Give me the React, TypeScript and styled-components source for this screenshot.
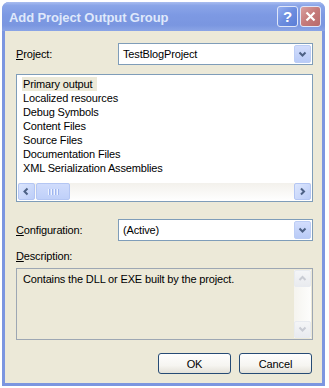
import styled, { createGlobalStyle } from 'styled-components';

const GlobalStyle = createGlobalStyle`
  body {
    margin: 0;
    background: #ffffff;
    font-family: "Liberation Sans", Arial, sans-serif;
    font-size: 11px;
    letter-spacing: -0.15px;
    color: #000000;
  }
`;

const outputs = [
  'Primary output',
  'Localized resources',
  'Debug Symbols',
  'Content Files',
  'Source Files',
  'Documentation Files',
  'XML Serialization Assemblies',
];

const Window = styled.div`
  margin: 2px 0 0 2px;
  width: 323px;
  height: 384px;
  border-radius: 7px 7px 0 0;
  background: #7c96e0;
  display: flex;
  flex-direction: column;
  box-sizing: border-box;
  overflow: hidden;
`;

const TitleBar = styled.div`
  height: 29px;
  flex-shrink: 0;
  display: flex;
  align-items: center;
  padding: 0 4px 0 7px;
  background: linear-gradient(#a9bdf0 0%, #8aa5e8 12%, #7d99e3 45%, #7a96e0 80%, #8ba5e6 100%);
`;

const Title = styled.div`
  flex: 1;
  font-family: "Liberation Sans", Arial, sans-serif;
  font-weight: bold;
  font-size: 13px;
  color: #dfe8fb;
  letter-spacing: -0.1px;
  padding-top: 1px;
`;

const CaptionButtons = styled.div`
  display: flex;
  gap: 2px;
`;

const CaptionButton = styled.div<{ $kind: 'help' | 'close' }>`
  width: 21px;
  height: 21px;
  box-sizing: border-box;
  border: 1px solid #dfe6f8;
  border-radius: 3px;
  display: flex;
  align-items: center;
  justify-content: center;
  background: ${p =>
    p.$kind === 'close'
      ? 'linear-gradient(135deg, #d9a0a0 0%, #c57a7a 50%, #b86a6a 100%)'
      : 'linear-gradient(135deg, #94aef0 0%, #6c8ddf 50%, #5a7dd6 100%)'};
  color: #ffffff;
  font-weight: bold;
  font-size: 15px;
`;

const Client = styled.div`
  flex: 1;
  margin: 0 3px 3px;
  background: #ece9d8;
  padding: 12px 9px 0 11px;
  display: flex;
  flex-direction: column;
`;

const FieldRow = styled.div<{ $top?: number }>`
  display: flex;
  align-items: center;
  margin-top: ${p => p.$top ?? 0}px;
`;

const Label = styled.div`
  width: 102px;
  line-height: 14px;
`;

const Combo = styled.div`
  flex: 1;
  height: 22px;
  box-sizing: border-box;
  border: 1px solid #7f9db9;
  background: #ffffff;
  display: flex;
  align-items: center;
  padding: 1px;
`;

const ComboText = styled.div`
  flex: 1;
  padding-left: 3px;
`;

const ComboButton = styled.div`
  width: 17px;
  height: 18px;
  box-sizing: border-box;
  border: 1px solid #bccdf5;
  border-radius: 2px;
  background: linear-gradient(#d2ddfc, #b9cbf7);
  display: flex;
  align-items: center;
  justify-content: center;
`;

const ListBox = styled.div`
  margin-top: 9px;
  height: 128px;
  box-sizing: border-box;
  border: 1px solid #7f9db9;
  background: #ffffff;
  display: flex;
  flex-direction: column;
`;

const Items = styled.div`
  flex: 1;
  padding: 2px 0 0 5px;
`;

const Item = styled.div<{ $selected?: boolean }>`
  display: inline-block;
  line-height: 14px;
  padding: 0 5px 0 1px;
  background: ${p => (p.$selected ? '#ece9d8' : 'transparent')};
`;

const ItemLine = styled.div`
  height: 14px;
`;

const HScroll = styled.div`
  height: 17px;
  margin: 0 1px 1px;
  background: linear-gradient(#f3f1ec, #fefefe);
  display: flex;
  align-items: center;
`;

const ScrollBtn = styled.div<{ $disabled?: boolean }>`
  width: 17px;
  height: 17px;
  box-sizing: border-box;
  border: 1px solid ${p => (p.$disabled ? '#e8ebf0' : '#b4c6f3')};
  border-radius: 2px;
  background: ${p =>
    p.$disabled ? 'linear-gradient(#f4f5f7, #e9ebef)' : 'linear-gradient(135deg, #dce6fd, #bccdf8)'};
  display: flex;
  align-items: center;
  justify-content: center;
  flex-shrink: 0;
`;

const Thumb = styled.div`
  width: 34px;
  height: 17px;
  margin-left: 1px;
  box-sizing: border-box;
  border: 1px solid #b4c6f3;
  border-radius: 2px;
  background: linear-gradient(#d0dcfc, #bfd0f9);
  display: flex;
  align-items: center;
  justify-content: center;
  gap: 1px;
`;

const Grip = styled.span`
  width: 1px;
  height: 6px;
  background: #eef3fe;
  box-shadow: 1px 0 0 #9fb6ef;
  margin-right: 1px;
`;

const Spacer = styled.div`
  flex: 1;
`;

const DescLabel = styled.div`
  margin-top: 8px;
  line-height: 14px;
`;

const DescBox = styled.div`
  margin-top: 5px;
  height: 72px;
  box-sizing: border-box;
  border: 1px solid #9da7b3;
  background: #ece9d8;
  display: flex;
`;

const DescText = styled.div`
  flex: 1;
  padding: 3px 0 0 6px;
  line-height: 14px;
`;

const VScroll = styled.div`
  width: 17px;
  margin: 1px 1px 1px 0;
  background: linear-gradient(90deg, #f5f4ef, #fdfdfc);
  display: flex;
  flex-direction: column;
  justify-content: space-between;
`;

const Buttons = styled.div`
  margin-top: 13px;
  display: flex;
  justify-content: flex-end;
  gap: 8px;
  padding-right: 1px;
`;

const Button = styled.div`
  width: 73px;
  height: 21px;
  box-sizing: border-box;
  border: 1px solid #264b75;
  border-radius: 3px;
  background: linear-gradient(#fefefe 0%, #f6f5f1 60%, #e3e1d8 100%);
  display: flex;
  align-items: center;
  justify-content: center;
`;

const Key = styled.span`
  text-decoration: underline;
`;

const Chevron = ({ dir, color = '#4d6185' }: { dir: 'down' | 'up' | 'left' | 'right'; color?: string }) => {
  const paths: Record<string, string> = {
    down: 'M1.5 2.5 L4.5 5.5 L7.5 2.5',
    up: 'M1.5 6 L4.5 3 L7.5 6',
    left: 'M5.5 1.5 L2.5 4.5 L5.5 7.5',
    right: 'M3 1.5 L6 4.5 L3 7.5',
  };
  return (
    <svg width="9" height="9" viewBox="0 0 9 9">
      <path d={paths[dir]} fill="none" stroke={color} strokeWidth="2" />
    </svg>
  );
};

export default function App() {
  return (
    <>
      <GlobalStyle />
      <Window>
        <TitleBar>
          <Title>Add Project Output Group</Title>
          <CaptionButtons>
            <CaptionButton $kind="help">?</CaptionButton>
            <CaptionButton $kind="close">
              <svg width="11" height="11" viewBox="0 0 11 11">
                <path d="M1.5 1.5 L9.5 9.5 M9.5 1.5 L1.5 9.5" stroke="#ffffff" strokeWidth="2.2" />
              </svg>
            </CaptionButton>
          </CaptionButtons>
        </TitleBar>
        <Client>
          <FieldRow>
            <Label>
              <Key>P</Key>roject:
            </Label>
            <Combo>
              <ComboText>TestBlogProject</ComboText>
              <ComboButton>
                <Chevron dir="down" />
              </ComboButton>
            </Combo>
          </FieldRow>

          <ListBox>
            <Items>
              {outputs.map((name, i) => (
                <ItemLine key={name}>
                  <Item $selected={i === 0}>{name}</Item>
                </ItemLine>
              ))}
            </Items>
            <HScroll>
              <ScrollBtn>
                <Chevron dir="left" />
              </ScrollBtn>
              <Thumb>
                <Grip />
                <Grip />
                <Grip />
                <Grip />
              </Thumb>
              <Spacer />
              <ScrollBtn>
                <Chevron dir="right" />
              </ScrollBtn>
            </HScroll>
          </ListBox>

          <FieldRow $top={17}>
            <Label>
              <Key>C</Key>onfiguration:
            </Label>
            <Combo>
              <ComboText>(Active)</ComboText>
              <ComboButton>
                <Chevron dir="down" />
              </ComboButton>
            </Combo>
          </FieldRow>

          <DescLabel>
            <Key>D</Key>escription:
          </DescLabel>
          <DescBox>
            <DescText>Contains the DLL or EXE built by the project.</DescText>
            <VScroll>
              <ScrollBtn $disabled>
                <Chevron dir="up" color="#c9ccd4" />
              </ScrollBtn>
              <ScrollBtn $disabled>
                <Chevron dir="down" color="#c9ccd4" />
              </ScrollBtn>
            </VScroll>
          </DescBox>

          <Buttons>
            <Button>OK</Button>
            <Button>Cancel</Button>
          </Buttons>
        </Client>
      </Window>
    </>
  );
}
